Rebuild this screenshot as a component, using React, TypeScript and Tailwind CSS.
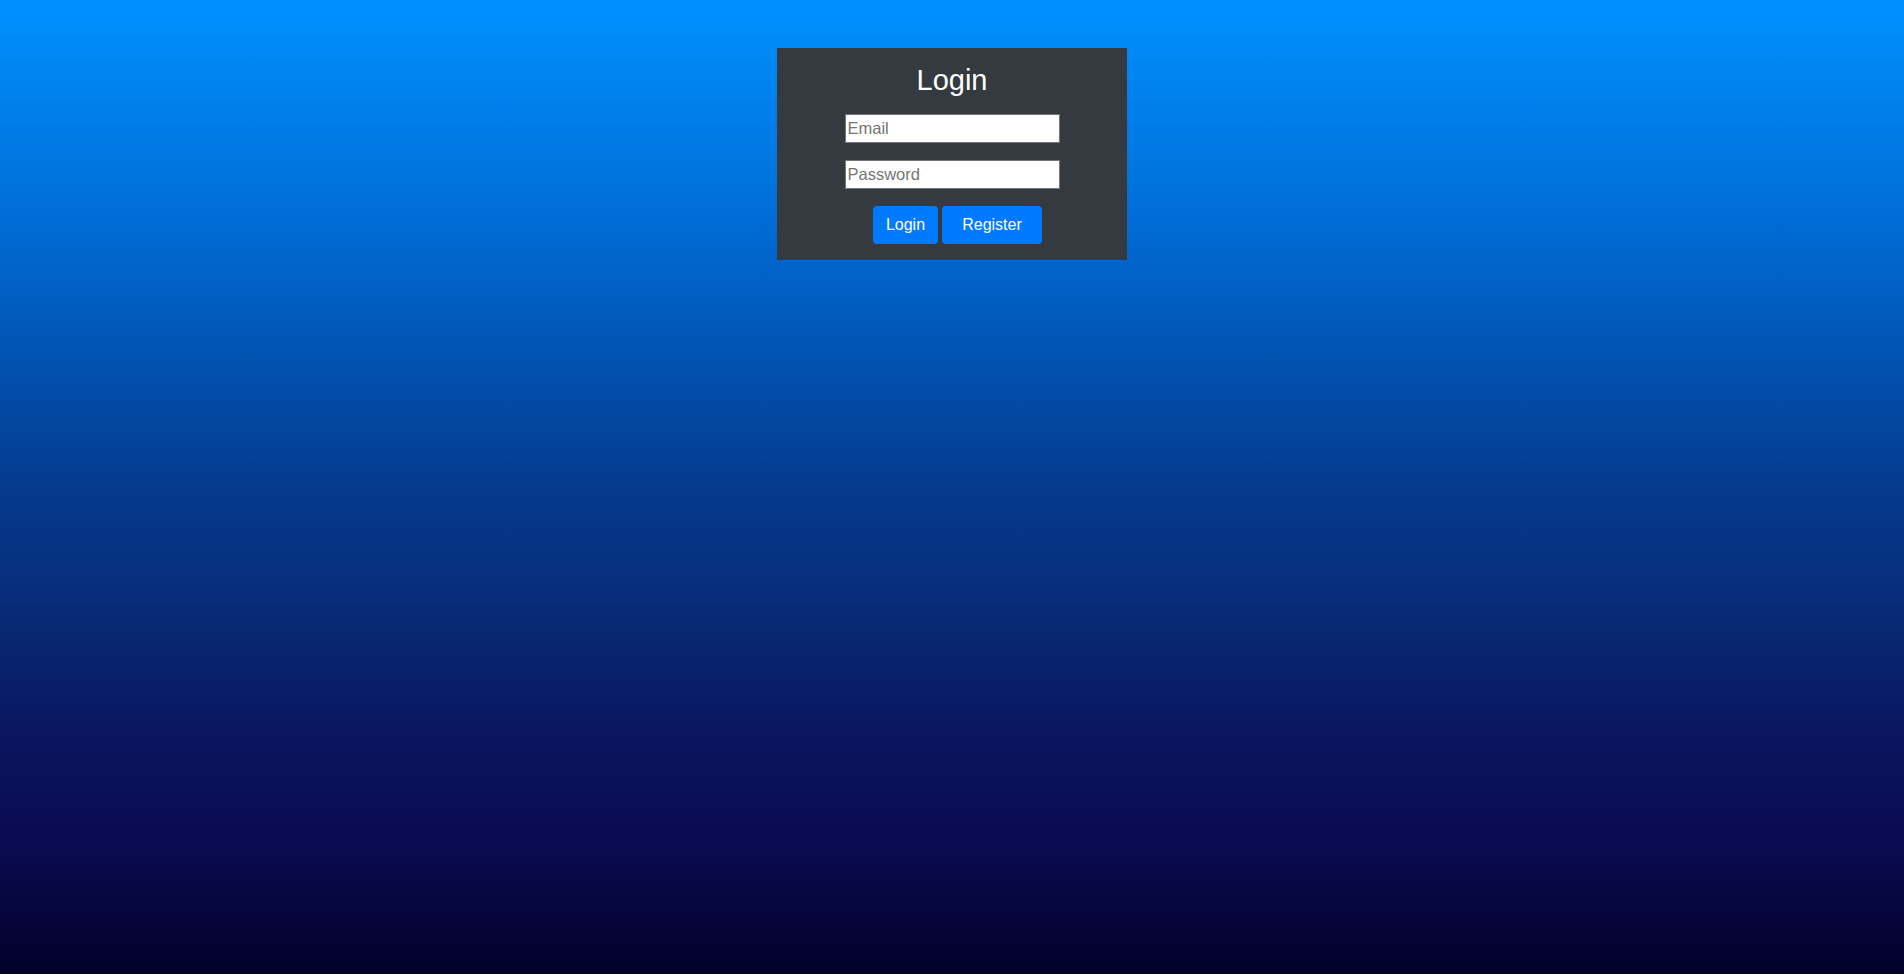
export default function App() {
  return (
    <div
      className="min-h-screen w-full flex justify-center items-start pt-[48px] bg-[linear-gradient(to_bottom,#0091ff_0%,#0068d0_25%,#053a8e_50%,#082c78_62%,#0a1660_75%,#0a0a50_87%,#01012a_100%)]"
      style={{ fontFamily: '"Liberation Sans", Arial, sans-serif' }}
    >
      <div className="w-[350px] h-[212px] bg-[#343a40] flex flex-col items-center">
        <h2 className="text-[29px] leading-none text-white mt-[12px] mb-[0px] h-[40px] flex items-center">Login</h2>
        <input
          type="text"
          placeholder="Email"
          className="mt-[14px] w-[215px] h-[29px] bg-white border border-[#767676] px-[2px] text-[16.5px] text-black placeholder:text-[#757575] outline-none"
        />
        <input
          type="password"
          placeholder="Password"
          className="mt-[17px] w-[215px] h-[29px] bg-white border border-[#767676] px-[2px] text-[16.5px] text-black placeholder:text-[#757575] outline-none"
        />
        <div className="mt-[17px] flex gap-[4px] pl-[11px]">
          <button className="w-[65px] h-[38px] bg-[#007bff] rounded-[4px] text-white text-[16px]">Login</button>
          <button className="w-[100px] h-[38px] bg-[#007bff] rounded-[4px] text-white text-[16px]">Register</button>
        </div>
      </div>
    </div>
  );
}
